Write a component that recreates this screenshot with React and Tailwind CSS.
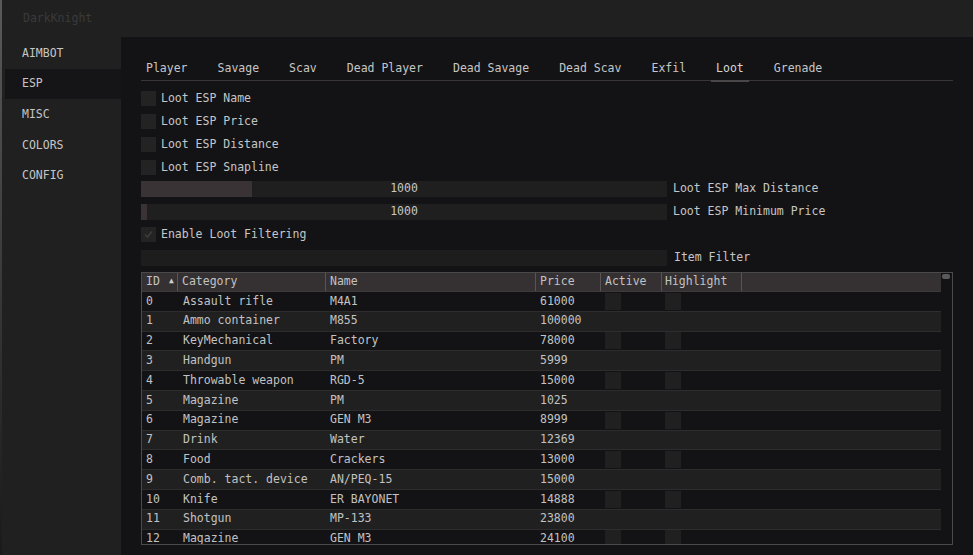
import React from "react";

const rows = [
  ["0", "Assault rifle", "M4A1", "61000"],
  ["1", "Ammo container", "M855", "100000"],
  ["2", "KeyMechanical", "Factory", "78000"],
  ["3", "Handgun", "PM", "5999"],
  ["4", "Throwable weapon", "RGD-5", "15000"],
  ["5", "Magazine", "PM", "1025"],
  ["6", "Magazine", "GEN M3", "8999"],
  ["7", "Drink", "Water", "12369"],
  ["8", "Food", "Crackers", "13000"],
  ["9", "Comb. tact. device", "AN/PEQ-15", "15000"],
  ["10", "Knife", "ER BAYONET", "14888"],
  ["11", "Shotgun", "MP-133", "23800"],
  ["12", "Magazine", "GEN M3", "24100"],
];

const tabs = ["Player", "Savage", "Scav", "Dead Player", "Dead Savage", "Dead Scav", "Exfil", "Loot", "Grenade"];
const side = ["AIMBOT", "ESP", "MISC", "COLORS", "CONFIG"];

function Box({ checked }) {
  return (
    <div className="w-[15px] h-[15px] bg-[#232323] flex items-center justify-center shrink-0">
      {checked && (
        <svg width="11" height="11" viewBox="0 0 11 11">
          <path d="M2 5.5 L4.5 8 L9 2.5" stroke="#3c3c3c" strokeWidth="1.6" fill="none" />
        </svg>
      )}
    </div>
  );
}

function Check({ label, checked }) {
  return (
    <div className="flex items-center h-[15px] gap-[5px]">
      <Box checked={checked} />
      <span>{label}</span>
    </div>
  );
}

function Slider({ fill, label }) {
  return (
    <div className="flex items-center h-[16px]">
      <div className="relative w-[526px] h-[16px] bg-[#1f1f1f] flex items-center justify-center">
        <div className="absolute left-0 top-0 h-full bg-[#393335]" style={{ width: fill }} />
        <span className="relative">1000</span>
      </div>
      <span className="ml-[6px]">{label}</span>
    </div>
  );
}

export default function App() {
  const mono = { fontFamily: '"DejaVu Sans Mono", "Liberation Mono", monospace' };
  return (
    <div
      className="w-[973px] h-[555px] bg-[#202020] flex overflow-hidden text-[11.5px] leading-none text-[#c6c6c6]"
      style={mono}
    >
      <div className="w-[2px] h-full bg-gradient-to-b from-[#5a5a5a] via-[#3a3a3a] to-[#1a1a1a] shrink-0" />
      <div className="flex-1 flex flex-col">
        <div className="h-[37px] flex items-center pl-[21px] text-[#3a3a3a] shrink-0">DarkKnight</div>
        <div className="flex flex-1 min-h-0">
          <div className="w-[119px] shrink-0 pl-[3px] pt-[1px] flex flex-col">
            {side.map((s) => (
              <div
                key={s}
                className={
                  "h-[30.7px] flex items-center pl-[17px] " + (s === "ESP" ? "bg-[#151517]" : "")
                }
              >
                {s}
              </div>
            ))}
          </div>
          <div className="flex-1 bg-[#131315] pl-[20px] pr-[20px] pt-[23px] flex flex-col min-w-0">
            {/* tabs */}
            <div className="relative border-b border-[#3a3536] h-[21px] flex items-start">
              <div className="flex gap-[30px] pl-[5px] pt-[3px]">
                {tabs.map((t) => (
                  <div key={t} className="relative">
                    <span className={t === "Loot" ? "text-[#d4d4d4]" : ""}>{t}</span>
                    {t === "Loot" && (
                      <div className="absolute left-[-5px] right-[-5px] top-[17px] h-[2px] bg-[#4a4748]" />
                    )}
                  </div>
                ))}
              </div>
            </div>
            <div className="flex flex-col gap-[8px] mt-[10px]">
              <Check label="Loot ESP Name" />
              <Check label="Loot ESP Price" />
              <Check label="Loot ESP Distance" />
              <Check label="Loot ESP Snapline" />
            </div>
            <div className="flex flex-col gap-[7px] mt-[6px]">
              <Slider fill={111} label="Loot ESP Max Distance" />
              <Slider fill={6} label="Loot ESP Minimum Price" />
            </div>
            <div className="mt-[7px]">
              <Check label="Enable Loot Filtering" checked />
            </div>
            <div className="flex items-center h-[16px] mt-[8px]">
              <div className="w-[526px] h-[16px] bg-[#1d1d1d]" />
              <span className="ml-[7px]">Item Filter</span>
            </div>
            {/* table */}
            <div className="mt-[6px] w-[812px] h-[273px] border border-[#4a4a4a] flex overflow-hidden text-[#c2c2c2]">
              <div className="w-[799px] flex flex-col">
                <div className="h-[19px] bg-[#353132] flex items-center shrink-0 border-b border-[#3f3a3b]">
                  <div className="w-[36px] h-full flex items-center pl-[4px] border-r border-[#5a5456] relative">
                    ID
                    <span className="absolute left-[27px] top-[4px] text-[8px] text-[#d0d0d0]">▲</span>
                  </div>
                  <div className="w-[148px] h-full flex items-center pl-[4px] border-r border-[#5a5456]">Category</div>
                  <div className="w-[210px] h-full flex items-center pl-[4px] border-r border-[#5a5456]">Name</div>
                  <div className="w-[65px] h-full flex items-center pl-[4px] border-r border-[#5a5456]">Price</div>
                  <div className="w-[61px] h-full flex items-center pl-[4px] border-r border-[#5a5456]">Active</div>
                  <div className="w-[80px] h-full flex items-center pl-[3px] border-r border-[#5a5456]">Highlight</div>
                  <div className="flex-1" />
                </div>
                {rows.map((r, i) => (
                  <div
                    key={r[0]}
                    className={
                      "h-[19.8px] shrink-0 flex items-center border-b border-[#2f2c2d] " +
                      (i % 2 === 1 ? "bg-[#202020]" : "bg-[#131315]")
                    }
                  >
                    <div className="w-[36px] pl-[4px]">{r[0]}</div>
                    <div className="w-[148px] pl-[5px]">{r[1]}</div>
                    <div className="w-[210px] pl-[4px]">{r[2]}</div>
                    <div className="w-[65px] pl-[4px]">{r[3]}</div>
                    <div className="w-[61px] pl-[4px]">
                      <div className="w-[16px] h-[17px] bg-[#202020]" />
                    </div>
                    <div className="w-[80px] pl-[3px]">
                      <div className="w-[16px] h-[17px] bg-[#202020]" />
                    </div>
                    <div className="flex-1" />
                  </div>
                ))}
              </div>
              <div className="flex-1 pt-[1px] pl-[1px]">
                <div className="w-[8px] h-[5px] rounded-[2px] bg-[#5a5a5a]" />
              </div>
            </div>
          </div>
        </div>
      </div>
    </div>
  );
}
